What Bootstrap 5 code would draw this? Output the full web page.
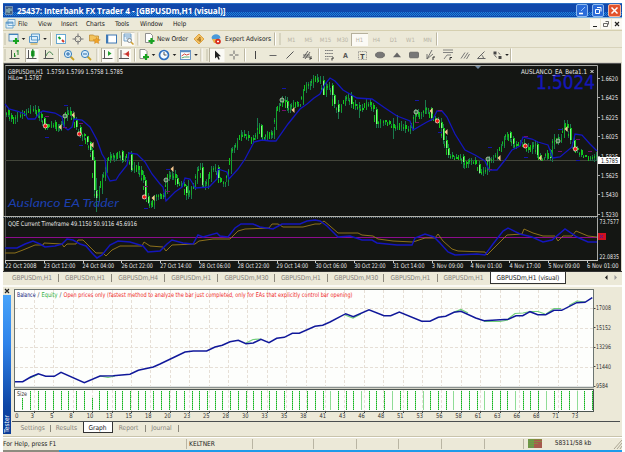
<!DOCTYPE html>
<html lang="en">
<head>
    <meta charset="UTF-8">
    <meta name="viewport" content="width=device-width, initial-scale=1.0">
    <title>Interbank FX Trader 4</title>
    <link href="https://cdn.jsdelivr.net/npm/bootstrap@5.3.0/dist/css/bootstrap.min.css" rel="stylesheet">
    <style>
        body {
            width: 625px;
            height: 452px;
            padding: 3px 3px 0 3px;
            overflow: hidden;
            background: #fff;
            color: #222;
            font-family: "DejaVu Sans Condensed", "DejaVu Sans", sans-serif;
            font-stretch: condensed;
            font-size: 6.6px;
            line-height: 1;
            white-space: nowrap;
        }
        svg { display: block; flex: none; }
        svg text { font-family: "DejaVu Sans Condensed", "DejaVu Sans", sans-serif; font-stretch: condensed; font-size: 6.4px; }
        .app { width: 619px; height: 449px; background: #ece9d8; }
        .title-strip {
            height: 15px;
            padding: 0 1px 0 2px;
            background: linear-gradient(#2a6fc4 0 1px, #1148ab 1px 9px, transparent 9px 13px, #1148ab 13px 14px, #7cb5e4 14px),
                repeating-conic-gradient(#1d83dd 0 25%, #1148ab 0 50%) 0 0 / 2px 2px;
            color: #fff;
            font: bold 8.2px "Open Sans", "Noto Sans", sans-serif;
        }
        .title-text { margin-left: 4px; letter-spacing: -.14px; }
        .win-btn { width: 12px; height: 13px; border: 1px solid #8db9ee; border-radius: 2px; background: #2a6bd8; }
        .win-close { width: 13px; background: #e2532c; border-color: #f3b8a0; }
        .menu-strip { height: 13px; border-bottom: 1px solid #d5cfaf; padding-left: 2px; }
        .menu-strip span { flex: none; letter-spacing: -.1px; }
        .w-file { width: 20px; } .w-view { width: 23px; } .w-insert { width: 25px; }
        .w-charts { width: 29px; } .w-tools { width: 25px; } .w-window { width: 33px; }
        .mdi-group { gap: 1px; }
        .mdi-btn { width: 10px; height: 10px; background: #fbfaf5; }
        .tool-strip { height: 16px; }
        .tool-strip + .tool-strip { height: 15px; border-top: 1px solid #d8d3bb; }
        .label-order { width: 34px; letter-spacing: -.1px; }
        .label-expert { width: 48px; letter-spacing: -.03px; }
        .tf { width: 17px; height: 13px; line-height: 13px; text-align: center; color: #b9b5a6; font-size: 6px; }
        .pressed { background: #fbfaf5; box-shadow: inset 1px 1px 0 #b5b09c; }
        .chart-tabs { height: 14px; padding-left: 3px; color: #85827a; border-top: 1px solid #333; }
        .chart-tab { flex: none; width: 53.1px; margin-top: 2px; padding-left: 6px; height: 8px; line-height: 8px; border-right: 1px solid #8b887c; letter-spacing: -.1px; }
        .chart-tab.m30 { width: 56.5px; }
        .chart-tab.last { border-right: 0; width: 52px; }
        .chart-tab.current { width: 76px; height: 12px; margin-top: 0; line-height: 12px; background: #fff; color: #222; border: 1px solid #333; border-top: 0; }
        .tester { height: 149px; border-top: 2px solid #fbfaf5; }
        .tester-side { width: 9px; padding: 1px 0 0 0; }
        .tester-bar { width: 8px; padding-bottom: 1px; color: #fff; background: linear-gradient(#48a3fa, #2f83ea 35%, #0e45a5 80%, #0b3b96); }
        .tester-bar span { writing-mode: vertical-rl; transform: rotate(180deg); }
        .tester-tabs { height: 12px; padding-left: 4px; color: #85827a; }
        .tester-tab { height: 7px; margin-top: 3px; line-height: 7px; text-align: center; border-right: 1px solid #8b887c; }
        .t-settings { width: 34.5px; } .t-results { width: 32px; border-right: 0; } .t-report { width: 33px; } .t-journal { width: 33px; }
        .t-graph { width: 30px; height: 11px; margin-top: 0; line-height: 12px; background: #fff; color: #222; border: 1px solid #333; border-top: 0; }
        .status-strip { height: 14px; border-top: 1px solid #c9c4ac; box-shadow: inset 0 1px 0 #fff; }
        .status-cell { flex: none; height: 10px; line-height: 11px; border-right: 1px solid #b9b5a3; padding-left: 2px; }
        .s-help { width: 184px; padding-left: 0; } .s-name { width: 66px; } .s-a { width: 61px; } .s-b { width: 42.7px; } .s-c { width: 39px; }
        .s-kb { margin-left: 12px; line-height: 11px; letter-spacing: -.1px; }
        .task-edge { height: 2px; background: linear-gradient(90deg, #8d8c80 0 56px, #1e9bea 56px); }
    </style>
</head>
<body>
<div class="app d-flex flex-column">
    <div class="title-strip d-flex align-items-center">
        <svg width="8" height="9"><rect x=".5" y=".5" width="7" height="8" fill="#46617f" stroke="#9cb0c5" stroke-width=".6"/><path d="M2 6.500V3M4 7V2M6 5V2.500" stroke="#cfe" stroke-width=".8"/></svg>
        <span class="title-text">25437: Interbank FX Trader 4 - [GBPUSDm,H1 (visual)]</span>
        <div class="d-flex gap-1 ms-auto">
            <div class="win-btn"><svg width="10" height="11"><path d="M2 8.500h4" stroke="#fff" stroke-width="1.6"/><path d="M4 6l4-4" stroke="#9cc6fa"/></svg></div>
            <div class="win-btn"><svg width="10" height="11"><path d="M4 2.500h4v4M2.500 4.500h4v4h-4z" fill="none" stroke="#fff"/></svg></div>
            <div class="win-btn win-close"><svg width="11" height="11"><path d="M2.500 2.500l6 6M8.500 2.500l-6 6" stroke="#fff" stroke-width="1.5"/></svg></div>
        </div>
    </div>

    <div class="menu-strip d-flex align-items-center">
        <svg width="13" height="12"><path d="M3 1.500h7v6H3zM1 4h7v6H1z" fill="#e4f2fb" stroke="#5c9bc8" stroke-width=".8"/><path d="M1 5h7" stroke="#3f83bd"/></svg>
        <span class="w-file">File</span>
        <span class="w-view">View</span>
        <span class="w-insert">Insert</span>
        <span class="w-charts">Charts</span>
        <span class="w-tools">Tools</span>
        <span class="w-window">Window</span>
        <span>Help</span>
        <div class="mdi-group d-flex ms-auto">
            <div class="mdi-btn"><svg width="10" height="10"><path d="M3 7.500h4" stroke="#222"/></svg></div>
            <div class="mdi-btn"><svg width="10" height="10"><path d="M4.500 2.500h3v3M2.500 4.500h4v3h-4z" fill="none" stroke="#444" stroke-width=".8"/></svg></div>
            <div class="mdi-btn"><svg width="10" height="10"><path d="M3 3l4 4M7 3l-4 4" stroke="#222" stroke-width="1.200"/></svg></div>
        </div>
    </div>

    <div class="tool-strip d-flex align-items-center" id="tools-main"></div>
    <div class="tool-strip d-flex align-items-center" id="tools-line"></div>

    <svg id="chart" width="619" height="209" viewBox="3 62 619 209"></svg>

    <div class="chart-tabs d-flex align-items-start">
        <div class="chart-tab">GBPUSDm,H1</div>
        <div class="chart-tab">GBPUSDm,H1</div>
        <div class="chart-tab">GBPUSDm,H4</div>
        <div class="chart-tab">GBPUSDm,H1</div>
        <div class="chart-tab m30">GBPUSDm,M30</div>
        <div class="chart-tab">GBPUSDm,H1</div>
        <div class="chart-tab m30">GBPUSDm,M30</div>
        <div class="chart-tab">GBPUSDm,H1</div>
        <div class="chart-tab last">GBPUSDm,H1</div>
        <div class="chart-tab current">GBPUSDm,H1 (visual)</div>
        <svg class="ms-auto me-1" width="14" height="12"><path d="M3.500 3v5L1 5.500z" fill="#222"/><path d="M10.500 3v5L13 5.500z" fill="#999"/></svg>
    </div>

    <div class="tester d-flex">
        <div class="tester-side d-flex flex-column">
            <svg width="9" height="7"><path d="M2 1l4 4M6 1L2 5" stroke="#222" stroke-width="1.200"/></svg>
            <div class="tester-bar flex-grow-1 d-flex justify-content-center align-items-end"><span>Tester</span></div>
        </div>
        <div class="d-flex flex-column">
            <svg id="report" width="610" height="135" viewBox="12 288 610 135"></svg>
            <div class="tester-tabs d-flex">
                <div class="tester-tab t-settings">Settings</div>
                <div class="tester-tab t-results">Results</div>
                <div class="tester-tab t-graph">Graph</div>
                <div class="tester-tab t-report">Report</div>
                <div class="tester-tab t-journal">Journal</div>
            </div>
        </div>
    </div>

    <div class="status-strip d-flex align-items-center mt-auto">
        <div class="status-cell s-help">For Help, press F1</div>
        <div class="status-cell s-name">KELTNER</div>
        <div class="status-cell s-a"></div>
        <div class="status-cell s-b"></div>
        <div class="status-cell s-b"></div>
        <div class="status-cell s-b"></div>
        <div class="status-cell s-b"></div>
        <div class="status-cell s-c"></div>
        <svg class="ms-1" width="15" height="9" id="traffic"></svg>
        <div class="s-kb">58311/58 kb</div>
        <svg class="ms-auto" width="9" height="11"><path d="M1 11L9 2M4 11l5-6M7 11l2-3" stroke="#aaa592"/></svg>
    </div>
    <div class="task-edge"></div>
</div>

<script src="https://cdn.jsdelivr.net/npm/bootstrap@5.3.0/dist/js/bootstrap.bundle.min.js"></script>
<script>
    // toolbar icons, each drawn around 0,0
    const plus = '<path d="M2-1v6M-1 2h6" stroke="#18a321" stroke-width="2.200"/>';
    const sheet = '<path d="M-4-5.500h5l2 2v7h-7z" fill="#fff" stroke="#777" stroke-width=".8"/>';
    const axes = '<path d="M-3.500-5v9M-5.500 3.500h10" stroke="#555" fill="none"/>';
    const lens = '<path d="M1 1l4 4" stroke="#c9a227" stroke-width="1.800"/><circle cx="-1" cy="-1" r="3.600" fill="#d6ecfb" stroke="#3a80bd"/>';
    const box = '<rect x="-6.500" y="-7" width="13" height="14" fill="#fbfaf5"/><path d="M-6.500 7V-7h13" stroke="#b5b09c" fill="none"/>';
    const icons = {
        grip: '<path d="M0-5.500v11" stroke="#b8b39d" stroke-width="1.600" stroke-dasharray="1 1"/>',
        sep: '<path d="M-.5-6.500v13" stroke="#bcb7a2"/><path d="M.5-6.500v13" stroke="#fff"/>',
        drop: '<path d="M-1.800-1h3.600L0 1z" fill="#222"/>',
        newChart: '<rect x="-5" y="-5" width="9" height="7" fill="#e8f4fb" stroke="#4a7ba6" stroke-width=".8"/><path d="M-5-4.500h9" stroke="#3f83bd"/>' + plus,
        profiles: '<path d="M-3-5h8v6h-8zM-5-2.500h8v6h-8z" fill="#dceefa" stroke="#4b8fc5" stroke-width=".9"/><path d="M-4 5h7" stroke="#c8a03a"/>',
        market: '<rect x="-4.500" y="-4.500" width="9" height="9" fill="#fff" stroke="#5aa0cf" stroke-width=".9"/><path d="M-2.500-2l2 2" stroke="#16a030" stroke-width="2"/><path d="M1 1l2 2" stroke="#d23a2a" stroke-width="2"/>',
        target: '<circle r="3" fill="none" stroke="#777"/><path d="M0-5.500v4M0 1.500v4M-5.500 0h4M1.500 0h4" stroke="#777"/>',
        folder: '<path d="M-5.500-4h4l1 1h4v5h-9z" fill="#f3c35c" stroke="#b98425" stroke-width=".7"/><path d="M1.500-1.500l1.300 2 2.500.3-2 1.500.5 2.200-2.300-1-2 1 .4-2.200-1.800-1.500 2.500-.3z" fill="#f0a227" stroke="#c47f18" stroke-width=".4"/>',
        terminal: '<rect x="-4.500" y="-4" width="10" height="8" fill="#fff" stroke="#3e78b5" stroke-width="1"/><path d="M-3.500-4v8" stroke="#3e78b5" stroke-width="1.500"/>',
        tester: box + '<path d="M-4-5h7v7h-7zM-4-3h7M-2-1h4" fill="#e4f0fa" stroke="#5a8fbd" stroke-width=".8"/><circle cx="1.500" cy="1.500" r="2" fill="#eef7fd" stroke="#777" stroke-width=".8"/><path d="M3 3l2.500 2.500" stroke="#d0a030" stroke-width="1.500"/>',
        order: sheet + plus,
        diamond: '<path d="M0-5L5 0 0 5-5 0z" fill="#f4c264" stroke="#d9982f" stroke-width=".8"/><path d="M1 3V-2l-2.500 3H2" stroke="#8b5a10" stroke-width=".8" fill="none"/>',
        expert: '<path d="M-4.500-1C-4-6 4-6 4.500-1L1 1h-4z" fill="#4a9ada"/><path d="M-4 0h7l-2 4h-3z" fill="#e8b04a"/><circle cx="2" cy="2.500" r="2.800" fill="#d82c20"/><path d="M1 2.500h2" stroke="#fff" stroke-width="1.400"/>',
        bars: axes + '<path d="M-.5-2v4M-.5 1h1.500M3-5v5M3-4H1.500" stroke="#228b2c"/>',
        candle: box + axes + '<rect x="-1" y="-4.500" width="3.600" height="6" rx="1" fill="#1fa32b"/><path d="M.800-6v9" stroke="#14761d"/>',
        line: axes + '<path d="M-3 1Q0-7 4 0" fill="none" stroke="#4a8a52"/>',
        zoomIn: lens + '<path d="M-3-1h4M-1-3v4" stroke="#2b6cab"/>',
        zoomOut: lens + '<path d="M-3-1h4" stroke="#2b6cab"/>',
        scroll: box + axes + '<path d="M0-4l3.500 2.500L0 1z" fill="#22a02e"/>',
        shift: box + axes + '<path d="M4-3.500L1-1l3 2.500zM-1-1h6" fill="#c9302a" stroke="#c9302a" stroke-width=".8"/>',
        clock: '<circle r="4.500" fill="#f4faff" stroke="#2f6fc0" stroke-width="1.700"/><path d="M0-3v3h2.500" fill="none" stroke="#444" stroke-width=".9"/>',
        template: '<rect x="-5" y="-4.500" width="10" height="9" fill="#fff" stroke="#5b8cc0" stroke-width=".9"/><path d="M-5-3.500H5" stroke="#5b8cc0" stroke-width="1.500"/><path d="M-4 1l3-2 2 1 3-1" fill="none" stroke="#d34a3a"/><path d="M-4 3l3-1h5" fill="none" stroke="#3a9a44" stroke-width=".8"/>',
        cursor: '<rect x="-7.500" y="-7" width="15" height="14" fill="#fbfaf5"/><path d="M-7.500 7V-7h15" stroke="#b5b09c" fill="none"/><path d="M-2-4.500v8l2-1.700 1.500 3 1.300-.6L1.500 1.300H4z" fill="#222"/>',
        cross: '<path d="M0-4.500v3.500M0 1v3.500M-4.500 0H-1M1 0h3.500" stroke="#666"/>',
        vline: '<path d="M-.5-4v8" stroke="#444"/>',
        hline: '<path d="M-3.500.5h7" stroke="#666"/>',
        diag: '<path d="M-3.500 3.500l7-7" stroke="#555"/>',
        channel: '<path d="M-4 3l5-7M-2 4l5-7M-4 0h7M-3 2h6" stroke="#555" stroke-width=".9"/><path d="M3 5V2h2M3 3.500h2" stroke="#333" fill="none" stroke-width=".8"/>',
        fibo: '<path d="M-5-4.500h8M-5-1.500h8M-5 1.500h8M-5 4h4" stroke="#777" stroke-dasharray="1.500 .6"/><path d="M2 5.500V3h2" stroke="#333" fill="none"/>',
        letter: '<text y="3" text-anchor="middle" style="font-size:7px;font-weight:bold" fill="#555">A</text>',
        label: '<path d="M-4-3.500h8v8h-8z" fill="none" stroke="#777" stroke-width=".7" stroke-dasharray="1 .7"/><text y="3.500" text-anchor="middle" style="font-size:7px;font-weight:bold" fill="#444">T</text>',
        ellipse: '<ellipse rx="4.500" ry="2.800" fill="#777" stroke="#555" stroke-width=".7"/>',
        triangle: '<path d="M0-2.500L4 2.200h-8z" fill="#666"/>',
        rect: '<rect x="-4.500" y="-2.800" width="9" height="5.600" rx="1" fill="#777" stroke="#555" stroke-width=".7"/>',
        fan: '<path d="M-4 4L1-5M-4 4l6-5M-4 4V-1" stroke="#666" stroke-width=".9"/><path d="M2 5V2h2" stroke="#333" fill="none"/>',
        expansion: '<path d="M-5-5h10M-5-2.500h10M-4 4L-1 0h4" stroke="#777" stroke-width=".9" fill="none"/><path d="M2 5V2.500h2" stroke="#333" fill="none"/>',
        fork: '<path d="M-4 3.500l4-6M-1 3.500l4-6M1.500 4l3-5" stroke="#777"/>',
        angle: '<path d="M3-3.500L-4 3.500h8M0 0q2 1 2 3.500" stroke="#666" fill="none"/>',
        arrows: '<path d="M-4-3.500h3v3h-3zM1 1h3v3H1z" fill="#444"/><path d="M-3 0l2 2.500M1-2.500l1.500 2" stroke="#666"/>'
    };

    const mainTools = [
        ['grip', 4], ['newChart', 14], ['drop', 5], ['profiles', 17], ['drop', 4], ['sep', 8], ['market', 12], ['target', 22],
        ['folder', 12], ['terminal', 20], ['tester', 14], ['sep', 7], ['order', 15], ['@New Order', 'label-order'],
        ['diamond', 16], ['expert', 18], ['@Expert Advisors', 'label-expert'], ['sep', 4], ['grip', 6],
        ['@M1', 'tf'], ['@M5', 'tf'], ['@M15', 'tf'], ['@M30', 'tf'], ['@H1', 'tf pressed'], ['@H4', 'tf'], ['@D1', 'tf'], ['@W1', 'tf'], ['@MN', 'tf'], ['sep', 2]
    ];
    const lineTools = [
        ['grip', 4], ['bars', 16], ['candle', 18], ['line', 16], ['sep', 4], ['zoomIn', 16], ['zoomOut', 18], ['sep', 5],
        ['scroll', 16], ['shift', 17], ['sep', 4], ['order', 14], ['drop', 5], ['clock', 16], ['drop', 5], ['template', 17],
        ['drop', 4], ['sep', 7], ['grip', 4], ['cursor', 16], ['cross', 18], ['sep', 4], ['vline', 18], ['hline', 16],
        ['diag', 18], ['channel', 16], ['sep', 8], ['fibo', 14], ['letter', 17], ['label', 17], ['ellipse', 18],
        ['triangle', 16], ['rect', 18], ['fan', 16], ['expansion', 18], ['fork', 16], ['angle', 17], ['arrows', 15], ['drop', 4], ['sep', 4]
    ];

    function drawTools(id, list) {
        document.getElementById(id).innerHTML = list.map(([name, size]) => {
            if (name[0] === '@') return `<span class="${size}">${name.slice(1)}</span>`;
            return `<svg width="${size}" height="14" viewBox="${-size / 2} -7 ${size} 14">${icons[name]}</svg>`;
        }).join('');
    }
    drawTools('tools-main', mainTools);
    drawTools('tools-line', lineTools);

    function label(x, y, text, width, attrs = 'fill="#e8e8e8"') {
        return `<text x="${x}" y="${y}" textLength="${width}" lengthAdjust="spacingAndGlyphs" ${attrs}>${text}</text>`;
    }

    // price chart
    const band = '5,104 9,109 17,111 25,114 28,119 35,119 39,113 43,111 55,113 62,117 64,127 68,130 72,127 74,119 82,120 90,127 97,140 102,154 105,159 107,175 110,181 116,180 119,175 127,165 129,153 137,154 145,162 152,174 160,184 ' +
        '163,187 166,201 168,199 175,192 182,187 185,178 190,179 193,184 195,188 209,187 217,179 218,169 227,172 229,179 238,169 245,159 254,142 262,140 270,141 276,141 288,124 300,109 307,104 314,98 320,94 325,84 330,78 335,81 343,90 357,98 372,99 385,108 397,116 410,121 413,130 427,122 433,119 437,111 442,111 447,117 455,134 465,150 ' +
        '475,155 485,161 489,170 497,170 505,160 512,150 520,146 523,137 532,139 538,142 548,145 553,158 560,157 572,147 575,134 582,135 590,144 597,151';

    const closes = [5,110,8,115,11,119,15,118,17,115,22,114,26,113,30,109,35,109,38,114,41,118,44,124,47,128,51,122,55,127,58,127,61,124,64,118,67,111,70,115,73,120,76,127,80,134,84,136,87,142,90,150,92,160,94,190,96,198,99,190,102,178,105,172,107,162,110,155,113,157,116,154,119,151,122,160,125,158,128,154,131,170,134,166,138,170,141,175,143,180,145,196,148,203,151,205,154,196,158,194,
        160,195,163,197,165,192,167,178,169,175,172,174,175,178,177,184,181,184,184,186,186,193,188,195,191,187,195,182,197,170,200,167,202,185,205,185,208,178,211,169,215,167,218,178,220,182,225,182,228,170,231,150,234,148,237,141,241,134,244,135,248,138,253,139,257,130,259,125,261,137,264,138,267,132,271,135,274,130,276,110,279,107,282,100,285,101,287,108,290,107,293,102,297,104,300,104,303,90,306,84,310,84,
        313,78,317,80,320,80,323,95,326,86,329,85,332,95,334,104,338,112,341,105,345,98,348,95,351,104,355,105,359,108,362,110,366,102,370,105,373,109,376,124,380,120,385,121,389,124,393,128,397,126,401,125,405,129,410,129,413,122,415,112,418,115,421,114,425,108,428,108,431,118,435,120,438,122,441,128,443,140,446,148,448,155,452,157,456,158,460,156,463,162,466,164,
        468,160,471,160,475,164,479,173,483,171,487,168,489,160,493,158,497,152,501,146,504,137,507,132,510,138,513,144,516,145,520,143,524,147,528,150,532,146,535,144,537,155,540,159,544,158,547,150,550,158,552,145,554,137,558,142,561,138,564,124,567,128,570,140,574,148,577,150,581,155,585,157,590,157,594,157,596,155];

    // these bars run well past their bodies: x -> [high, low]
    const longWicks = { 96: [178, 212], 257: [118, 138], 393: [118, 139], 397: [115, 130], 359: [102, 118], 338: [100, 119], 276: [107, 128], 564: [120, 130], 425: [100, 112], 463: [154, 168], 316: [74, 86], 188: [180, 199] };

    let candles = '';
    for (let i = 2; i < closes.length; i += 2) {
        const x = closes[i], close = closes[i + 1], open = closes[i - 1];
        const down = close > open;
        const top = Math.min(open, close), h = Math.max(Math.abs(close - open), 2);
        const over = Math.round(Math.abs(Math.sin(i * 1.7)) * 4), under = Math.round(Math.abs(Math.sin(i * 2.9)) * 4);
        const [high, low] = longWicks[x] || [top - over, top + h + under];
        candles += `<path d="M${x + .5} ${high}V${low}" stroke="#1a7a4c"/>`;
        candles += `<rect x="${x}" y="${top}" width="${down ? 2 : 1}" height="${h}" fill="${down ? '#12c81c' : '#13a32e'}"/>`;
        if (down && h > 5) candles += `<path d="M${x + .5} ${top + 1}v${h - 1}" stroke="#8df08d"/>`;
        // in-between bar
        const mid = Math.round((open + close) / 2);
        candles += `<path d="M${x - 1.5} ${mid - 1 - (over >> 1)}v${3 + under}" stroke="${i % 6 ? '#157047' : '#10c418'}"/>`;
        candles += `<path d="M${x - 1.5} ${mid}v2" stroke="#12c81c"/>`;
    }

    const reds = [[45,126],[79,134],[144,197],[437,121],[525,146],[575,149]];
    const rings = [[65,116],[166,180],[282,100],[416,112],[488,159],[558,141]];
    const exits = [[60,127],[73,115],[92,145],[153,198],[172,169],[293,110],[431,111],[446,132],[499,158],[540,158],[566,129]];
    const stops = [[66,105],[47,137],[81,145],[146,208],[168,169],[284,88],[417,100],[440,132],[490,147],[526,157],[560,129],[578,160]];
    const takes = [[47,116],[65,127],[81,123],[146,186],[168,191],[284,110],[417,122],[440,110],[490,169],[526,136],[560,151],[578,139],[590,151]];
    const marks = stops.map(([x, y]) => `<path d="M${x - 2} ${y + .5}h4" stroke="#1515a8"/>`).join('') +
        takes.map(([x, y]) => `<path d="M${x - 2} ${y + .5}h4" stroke="#750e6c"/>`).join('') +
        rings.map(([x, y]) => `<circle cx="${x}" cy="${y}" r="2" fill="#3a7a4a" stroke="#b4c4b0" stroke-width=".9"/>`).join('') +
        reds.map(([x, y]) => `<circle cx="${x + .3}" cy="${y}" r="2.400" fill="#e8cbb8"/><path d="M${x + .3} ${y - 2}l2 2-2 2-2-2z" fill="#f01818"/>`).join('') +
        exits.map(([x, y]) => `<path d="M${x + 1.5} ${y - 3}v6l-3-3z" fill="#f6c890"/>`).join('');

    const fastLine = '5,248 17,248 25,244 33,241 40,244 45,247 55,246 62,244 67,239 73,240 80,244 86,246 92,253 97,258 102,255 110,245 118,241 130,242 143,246 148,252 160,251 167,244 172,240 183,243 193,244 198,235 203,237 217,233 220,236 228,237 235,228 241,224 253,224 260,227 273,229 282,224 300,224 307,221 315,220 320,221 327,226 338,237 350,236 362,240 372,240 377,243 397,245 412,245 415,238 425,234 434,237 440,243 448,252 455,255 477,254 485,255 493,244 503,231 508,228 520,234 532,237 543,242 552,240 565,229 577,237 588,242 597,242';
    const slowLine = '5,253 15,253 23,250 35,245 43,245 44,243 62,244 64,247 67,244 76,244 78,240 83,240 87,244 96,253 103,253 106,256 112,250 120,246 142,246 144,242 150,246 163,247 166,251 172,245 195,244 199,241 213,239 230,239 238,231 245,229 269,228 272,224 278,224 283,227 303,227 315,224 320,224 324,221 330,226 338,233 358,233 362,235 373,236 378,239 393,241 413,242 425,238 435,238 438,234 443,241 452,249 458,251 485,252 487,255 495,247 507,235 522,234 524,229 533,233 543,236 555,236 558,241 563,236 572,236 576,231 588,236 597,237';

    const dates = ['22 Oct 2008', '23 Oct 12:00', '24 Oct 04:00', '26 Oct 22:00', '27 Oct 14:00', '28 Oct 06:00', '28 Oct 22:00', '29 Oct 14:00', '30 Oct 06:00', '30 Oct 22:00', '31 Oct 14:00', '3 Nov 09:00', '4 Nov 01:00', '4 Nov 17:00', '5 Nov 09:00', '6 Nov 01:00'];
    const prices = ['1.6620', '1.6425', '1.6225', '1.6025', '1.5825', '1.5625', '1.5430', '1.5230'];

    document.getElementById('chart').innerHTML = `
        <rect x="3" y="62" width="619" height="209" fill="#141613"/>
        <path d="M3 62.500H622" stroke="#d8d5c6"/><path d="M3 63.500H622" stroke="#555"/>
        <path d="M3.500 63V271" stroke="#a9a796"/>
        <path d="M5 65.500H597.500V260" fill="none" stroke="#a9aaa6"/><path d="M5.500 65V260" stroke="#777" stroke-width=".6"/>
        <path d="M621.500 62V271" stroke="#d8d5c6"/>
        <path d="M5 160.500H597" stroke="#43453a"/>
        ${candles}
        <polyline points="${band}" fill="none" stroke="#1416bd" stroke-width="1.300"/>
        ${marks}
        <path d="M475 66h6l-3 3z" fill="#7088a0"/>
        ${label(8, 74, 'GBPUSDm,H1&#160; 1.5759 1.5799 1.5758 1.5785', 115)}
        ${label(8, 79.500, 'HiLo= 1.5787', 34)}
        ${label(8, 207, 'Auslanco EA Trader', 111, 'fill="#1c3fae" style="font:italic 12px Lato,sans-serif"')}
        ${label(536, 89, '1.5024', 59, 'fill="#1416b8" stroke="#1416b8" stroke-width=".4" style="font-size:20px"')}
        ${label(521, 74, 'AUSLANCO_EA_Beta1.1', 66)}
        <path d="M590.500 70l3 3M593.500 70l-3 3" stroke="#eee"/>
        ${prices.map((p, i) => `<path d="M598 ${78.500 + Math.round(i * 19.4)}h2" stroke="#aaa"/>` + label(601, 81 + i * 19.4, p, 17)).join('')}
        <rect x="598" y="157" width="22" height="7" fill="#fff"/>${label(601, 163, '1.5785', 17, 'fill="#111"')}
        <path d="M3 216.500H598" stroke="#b0b0aa"/><path d="M3 217.500H598" stroke="#5f6f7c" stroke-dasharray="1 1"/>
        ${label(8, 225.500, 'QQE Current Timeframe 49.1150 50.9116 45.6916', 129)}
        <path d="M5 237.500H597" stroke="#8c0c8c"/>
        <polyline points="${slowLine}" fill="none" stroke="#9a7a1c" stroke-width=".9"/>
        <polyline points="${fastLine}" fill="none" stroke="#1416bd" stroke-width="1.500"/>
        ${label(599.500, 224, '73.7577', 19.5)}${label(599.500, 258.500, '22.0835', 19.5)}
        <rect x="598" y="233" width="8" height="7" fill="#d01020"/><path d="M600 235l3 3M603 235l-3 3" stroke="#5a1090"/>
        <path d="M5 260.500H598" stroke="#c8c8c4"/>
        ${dates.map((d, i) => `<path d="M${Math.round(5 + i * 38.8) + .5} 260v3" stroke="#c8c8c4"/>` + label(5 + i * 38.8, 268, d, 31.5)).join('')}`;

    // tester report
    const balance = '15,382.7 22.7,382.7 30.7,378 38.3,374.7 45.7,377.3 54.3,377.3 61,373.3 84.3,383.7 100,377 113.3,376.7 130,375.3 138.3,371.3 153.3,368 160,365 176.7,357 185,353 193.3,352 206.7,352 215,348 222.3,346.3 230,342.7 238.3,341.3 246,344.7 253.3,344 261,340.3 269,343.7 276.7,339.3 284.3,338.3 292.3,334.3 299.3,334.3 315,327.3 322.7,326.3 330,323 345.7,314.7 353.3,317.7 369,310.7 384,316.7 390.7,316.7 399.3,313 421.7,322.3 430,322.3 438.3,318.3 445.7,317.3 454,313.3 461,312.3 475.7,319 484,321.7 508.3,320.3 516,316.7 522.7,316.7 530,312.7 537.7,315.7 545.7,315.7 554,311.3 561.7,311.3 576.7,303.7 585,303.3 592.3,298.7';
    const equity = ['30,379 38,375.500', '100,377 108,378.500 115,377', '246,344 253,340.500 261,340', '345,316 353,319 361,315', '454,313 461,310.500 468,314', '484,322.500 500,322.500 508,321', '508,320 515,314.500 523,314 530,312.500 538,312.500 545,315', '546,315 554,309.500 561,309.500', '569,306.500 577,302 585,303'];
    const ticks = [3, 5, 8, 10, 13, 15, 18, 20, 23, 25, 28, 30, 33, 35, 38, 41, 43, 46, 48, 51, 53, 56, 58, 61, 63, 66, 68, 71, 73];
    let grid = '', sizes = '', xLabels = label(15, 419, '0', 3.5, 'fill="#333"');
    ticks.forEach((t, i) => {
        const x = Math.round(34 + i * 19.4) + .5;
        grid += `<path d="M${x} 291V387M${x} 391V412" stroke="#e6dfd6" stroke-dasharray="3 2"/><path d="M${x} 412v2" stroke="#444"/>`;
        xLabels += label((t < 10 ? 30.5 : 28.5) + i * 19.4, 419, t, t < 10 ? 3.5 : 6.5, 'fill="#333"');
    });
    [309, 329, 348, 368].forEach(y => grid += `<path d="M15 ${y + .5}H593" stroke="#e6dfd6" stroke-dasharray="3 2"/>`);
    for (let i = 0; i < 75; i++) {
        const x = Math.round(22.2 + i * 7.7) + .5;
        const pale = i > 38 && i % 4 === 0;
        sizes += `<path d="M${x} ${i === 0 || i === 9 ? 399 : 392}V411" stroke="${pale ? '#8fdc96' : '#12b41c'}" ${pale ? '' : 'stroke-dasharray="1.600 .4"'}/>`;
    }
    document.getElementById('report').innerHTML = `
        <rect x="14.500" y="290.500" width="579" height="98" fill="#fdfefc" stroke="#6b7470"/>
        <rect x="14.500" y="390.500" width="579" height="22" fill="#fdfefc" stroke="#4b5450"/>
        <path d="M14 388.500H594" stroke="#8b9290" stroke-width="1.500"/>
        ${grid}${sizes}
        ${equity.map(p => `<polyline points="${p}" fill="none" stroke="#6fce78" stroke-width="1.200"/>`).join('')}
        <polyline points="${balance}" fill="none" stroke="#10189a" stroke-width="1.500"/>
        ${label(17, 297.500, 'Balance', 18.5, 'fill="#10187a"')}${label(37.500, 297.500, '/', 2, 'fill="#555"')}
        ${label(41.500, 297.500, 'Equity', 16, 'fill="#2fae3a"')}${label(59.500, 297.500, '/', 2, 'fill="#555"')}
        ${label(63.500, 297.500, 'Open prices only (fastest method to analyze the bar just completed, only for EAs that explicitly control bar opening)', 289, 'fill="#f02a2a"')}
        ${label(17, 397, 'Size', 10, 'fill="#333"')}
        ${['17008', '15152', '13296', '11440', '9584'].map((v, i) => `<path d="M594 ${Math.round(309 + i * 19.4) + .5}h1.500" stroke="#444"/>` + label(596, 311.300 + i * 19.4, v, v.length * 3, 'fill="#333"')).join('')}
        ${xLabels}
        <path d="M12 422.500H620" stroke="#4b4f50"/>`;

    // connection meter
    let meter = '';
    for (let i = 0; i < 7; i++) meter += `<path d="M${i * 2 + 1} 0v9" stroke="${i < 3 ? '#3d7a22' : '#8f2a20'}" stroke-width="1.500"/><path d="M${i * 2 + 1} 0v${9 - i}" stroke="#7c9a3c" stroke-width="1.400" stroke-dasharray="1 1"/>`;
    document.getElementById('traffic').innerHTML = meter;
</script>
</body>
</html>
